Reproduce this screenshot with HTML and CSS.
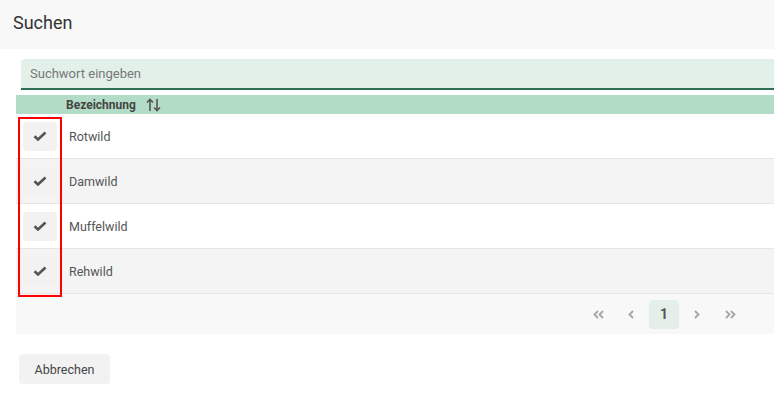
FILE: index.html
```html
<!DOCTYPE html>
<html lang="de">
<head>
    <meta charset="UTF-8">
    <meta name="viewport" content="width=device-width, initial-scale=1.0">
    <title>Suchen</title>
    <link rel="stylesheet" href="styles.css">
</head>
<body>
    <div class="header">
        <h1>Suchen</h1>
    </div>

    <div class="content">
        <div class="search">
            <input type="text" placeholder="Suchwort eingeben" autofocus>
        </div>

        <div class="table">
            <div class="table-head">
                <div class="col-check"></div>
                <div class="col-name">Bezeichnung
                    <svg class="sort" width="15" height="14" viewBox="0 0 15 14"><path d="M4 13 V1.5 M1 4.5 L4 1.5 L7 4.5 M11 1 V12.5 M8 9.5 L11 12.5 L14 9.5" fill="none" stroke="#555" stroke-width="1.6"/></svg>
                </div>
            </div>

            <div class="rows">
                <div class="row">
                    <div class="col-check"><span class="check-btn"><svg width="14" height="10" viewBox="0 0 14 10"><path d="M1.5 5.2 L5 8.5 L12.5 1.5" fill="none" stroke="#555" stroke-width="2.6"/></svg></span></div>
                    <div class="col-name">Rotwild</div>
                </div>
                <div class="row">
                    <div class="col-check"><span class="check-btn"><svg width="14" height="10" viewBox="0 0 14 10"><path d="M1.5 5.2 L5 8.5 L12.5 1.5" fill="none" stroke="#555" stroke-width="2.6"/></svg></span></div>
                    <div class="col-name">Damwild</div>
                </div>
                <div class="row">
                    <div class="col-check"><span class="check-btn"><svg width="14" height="10" viewBox="0 0 14 10"><path d="M1.5 5.2 L5 8.5 L12.5 1.5" fill="none" stroke="#555" stroke-width="2.6"/></svg></span></div>
                    <div class="col-name">Muffelwild</div>
                </div>
                <div class="row">
                    <div class="col-check"><span class="check-btn"><svg width="14" height="10" viewBox="0 0 14 10"><path d="M1.5 5.2 L5 8.5 L12.5 1.5" fill="none" stroke="#555" stroke-width="2.6"/></svg></span></div>
                    <div class="col-name">Rehwild</div>
                </div>
                <!-- highlight around the check column -->
                <div class="highlight"></div>
            </div>

            <div class="pager">
                <span class="page-btn"><svg width="11" height="9" viewBox="0 0 11 9"><path d="M5 1 L1.5 4.5 L5 8 M10 1 L6.5 4.5 L10 8" fill="none" stroke="#a5a5a5" stroke-width="1.8"/></svg></span>
                <span class="page-btn"><svg width="6" height="9" viewBox="0 0 6 9"><path d="M5 1 L1.5 4.5 L5 8" fill="none" stroke="#a5a5a5" stroke-width="1.8"/></svg></span>
                <span class="page-btn active">1</span>
                <span class="page-btn"><svg width="6" height="9" viewBox="0 0 6 9"><path d="M1 1 L4.5 4.5 L1 8" fill="none" stroke="#a5a5a5" stroke-width="1.8"/></svg></span>
                <span class="page-btn"><svg width="11" height="9" viewBox="0 0 11 9"><path d="M1 1 L4.5 4.5 L1 8 M6 1 L9.5 4.5 L6 8" fill="none" stroke="#a5a5a5" stroke-width="1.8"/></svg></span>
            </div>
        </div>

        <button class="cancel">Abbrechen</button>
    </div>
</body>
</html>
```

FILE: styles.css
```css
* {
    margin: 0;
    padding: 0;
    box-sizing: border-box;
    font-family: Roboto, 'Liberation Sans', Arial, sans-serif;
}

body {
    background: white;
    width: 774px;
    overflow: hidden;
}

.header {
    background: #f8f8f8;
    height: 49px;
    padding: 12px 13px 0;
}

.header h1 {
    font-size: 18px;
    font-weight: 400;
    color: #333;
}

.content {
    padding: 10px 0 0 16px;
}

.search {
    padding-left: 5px;
}

.search input {
    width: 100%;
    height: 31px;
    border: none;
    border-bottom: 2px solid #2d6e55;
    border-radius: 4px 0 0 0;
    background: #e3f0ea;
    padding: 0 9px;
    font-size: 13px;
    color: #444;
    outline: none;
    caret-color: #333;
}

.search input::placeholder {
    color: #777;
}

.table {
    margin-top: 5px;
}

.table-head {
    display: flex;
    align-items: center;
    height: 19px;
    background: #b3dcc6;
    font-size: 12px;
    font-weight: 700;
    color: #444;
}

.table-head .col-name {
    margin-left: -3px;
    display: flex;
    align-items: center;
}

.sort {
    margin-left: 10px;
}

.rows {
    position: relative;
}

.row {
    display: flex;
    align-items: center;
    height: 45px;
    border-bottom: 1px solid #e6e6e6;
    font-size: 12.5px;
    color: #555;
}

.row:nth-child(even) {
    background: #f4f4f4;
}

.col-check {
    width: 53px;
    padding-left: 7px;
    display: flex;
    align-items: center;
}

.check-btn {
    width: 34px;
    height: 29px;
    border-radius: 4px;
    background: #f2f2f2;
    display: flex;
    align-items: center;
    justify-content: center;
}

.highlight {
    position: absolute;
    left: 2px;
    top: 3px;
    width: 44px;
    height: 180px;
    border: 2px solid #f00;
}

.pager {
    display: flex;
    justify-content: flex-end;
    align-items: center;
    gap: 3px;
    height: 40px;
    background: #f8f8f8;
    padding-right: 29px;
}

.page-btn {
    width: 30px;
    height: 29px;
    display: flex;
    align-items: center;
    justify-content: center;
    border-radius: 4px;
}

.page-btn.active {
    background: #e3efe8;
    color: #555;
    font-size: 14px;
    font-weight: 700;
}

.cancel {
    margin: 20px 0 0 3px;
    width: 91px;
    height: 30px;
    border: none;
    border-radius: 4px;
    background: #f2f2f2;
    color: #444;
    font-size: 12.5px;
    cursor: pointer;
}
```
